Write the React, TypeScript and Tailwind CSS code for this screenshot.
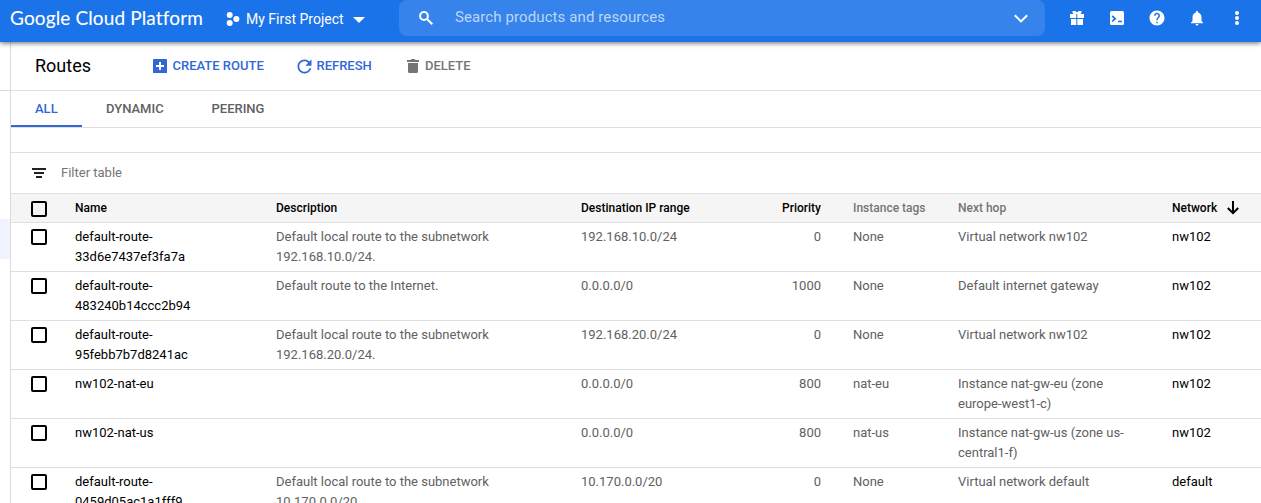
import React from "react";
import { MdHelp, MdNotifications, MdRefresh } from "react-icons/md";

type Route = {
  name: [string, string?];
  description: [string?, string?];
  range: string;
  priority: number;
  tags: string;
  hop: [string, string?];
  network: string;
};

const routes: Route[] = [
  { name: ["default-route-", "33d6e7437ef3fa7a"], description: ["Default local route to the subnetwork", "192.168.10.0/24."], range: "192.168.10.0/24", priority: 0, tags: "None", hop: ["Virtual network nw102"], network: "nw102" },
  { name: ["default-route-", "483240b14ccc2b94"], description: ["Default route to the Internet."], range: "0.0.0.0/0", priority: 1000, tags: "None", hop: ["Default internet gateway"], network: "nw102" },
  { name: ["default-route-", "95febb7b7d8241ac"], description: ["Default local route to the subnetwork", "192.168.20.0/24."], range: "192.168.20.0/24", priority: 0, tags: "None", hop: ["Virtual network nw102"], network: "nw102" },
  { name: ["nw102-nat-eu"], description: [], range: "0.0.0.0/0", priority: 800, tags: "nat-eu", hop: ["Instance nat-gw-eu (zone", "europe-west1-c)"], network: "nw102" },
  { name: ["nw102-nat-us"], description: [], range: "0.0.0.0/0", priority: 800, tags: "nat-us", hop: ["Instance nat-gw-us (zone us-", "central1-f)"], network: "nw102" },
  { name: ["default-route-", "0459d05ac1a1fff9"], description: ["Default local route to the subnetwork", "10.170.0.0/20."], range: "10.170.0.0/20", priority: 0, tags: "None", hop: ["Virtual network default"], network: "default" },
];

const columns =
  "grid grid-cols-[64px_201px_305px_200px_40px_32px_105px_214px_1fr]";

function Lines({ text }: { text: (string | undefined)[] }) {
  return (
    <div>
      {text.map((line, i) => (
        <div key={i}>{line}</div>
      ))}
    </div>
  );
}

function Checkbox() {
  return <span className="block size-4 rounded-[2px] border-2 border-black" />;
}

function TopBar() {
  return (
    <header className="relative z-10 flex h-[42px] shrink-0 bg-[#1a73e8] text-white shadow-[0_1px_5px_rgba(0,0,0,0.6)]">
      <div className="flex h-[37px] w-[399px] items-center pl-[10px]">
        <span className="w-[216px] whitespace-nowrap font-[Lato,sans-serif] text-[19px] tracking-[0.13px] [-webkit-text-stroke:0.1px_white]">
          Google Cloud Platform
        </span>
        <svg className="mt-[1px] h-[14px] w-[14px]" viewBox="0 0 14 14" fill="currentColor">
          <circle cx="3.7" cy="3" r="3" />
          <circle cx="10.4" cy="7" r="3" />
          <circle cx="3.7" cy="11" r="3" />
        </svg>
        <span className="ml-[6px] w-[107px] whitespace-nowrap pt-px text-[14px]">My First Project</span>
        <svg className="mt-[3px] h-[6px] w-[12px]" viewBox="0 0 12 6" fill="currentColor">
          <path d="M0 0h12L6 6z" />
        </svg>
      </div>
      <div className="flex h-9 w-[646px] items-center rounded-lg bg-[#3683eb] pl-[20px]">
        <svg className="h-[14px] w-[14px]" viewBox="0 0 14 14" fill="none" stroke="currentColor" strokeWidth="2">
          <circle cx="5" cy="5" r="3.900" />
          <path d="m8 8 5.300 5.300" />
        </svg>
        <span className="ml-[22px] flex-1 pb-[2px] text-[15px] tracking-[0.1px] text-[#bcd7f9]">
          Search products and resources
        </span>
        <svg className="mr-[17px] mt-[1px] h-[9px] w-[14px]" viewBox="0 0 14 9" fill="none" stroke="currentColor" strokeWidth="2">
          <path d="M.8 1.2 7 7.4l6.2-6.2" />
        </svg>
      </div>
      <div className="flex h-9 items-center gap-[22px] pl-[23px]">
        <svg className="size-[18px]" viewBox="0 0 18 18" fill="currentColor">
          <path d="M2 5h6.300v4H2zM9.300 5H16v4H9.300zM3 10h5.300v6H3zM9.300 10H15v6H9.300z" />
          <path d="M4.500 2h3L9 3.400 10.500 2h3v1.500L12.500 5h-7l-1-1.500z" />
        </svg>
        <svg className="size-[18px]" viewBox="0 0 18 18">
          <rect x="2" y="2" width="14" height="14" rx="1.500" fill="white" />
          <path d="M4.200 7 7.200 9.700l-3 2.700M10 12.500h4" fill="none" stroke="#1a73e8" strokeWidth="1.700" />
        </svg>
        <MdHelp className="size-[18px]" />
        <MdNotifications className="size-[18px]" />
        <svg className="size-[18px]" viewBox="0 0 18 18" fill="currentColor">
          <circle cx="9" cy="4" r="2" />
          <circle cx="9" cy="9" r="2" />
          <circle cx="9" cy="14" r="2" />
        </svg>
      </div>
    </header>
  );
}

export default function App() {
  return (
    <div className="flex h-[503px] w-[1261px] flex-col overflow-hidden bg-white font-[Roboto,sans-serif] text-[13px] text-black">
      <TopBar />
      <div className="flex min-h-0 flex-1">
        <aside className="flex w-[10px] shrink-0 flex-col">
          <div className="h-[49px] border-b border-[#dadada]" />
          <div className="mt-[128px] h-10 bg-[#f0f4fe]" />
        </aside>
        <main className="flex min-w-0 flex-1 flex-col border-l border-[#dadada]">
          <div className="flex h-[49px] shrink-0 items-center border-b border-[#e0e0e0] pl-6 font-medium text-[#3367d6]">
            <h1 className="w-[118px] pb-[2px] text-[18px] font-normal text-black">Routes</h1>
            <svg className="h-[14px] w-[14px]" viewBox="0 0 14 14">
              <rect width="14" height="14" rx="0.500" fill="currentColor" />
              <path d="M7 3v8M3 7h8" stroke="white" strokeWidth="2" />
            </svg>
            <span className="ml-[5.500px] w-[121px]">CREATE ROUTE</span>
            <MdRefresh className="size-[21px]" />
            <span className="ml-[2px] w-[90.500px]">REFRESH</span>
            <svg className="h-[14px] w-3 text-[#757575]" viewBox="0 0 12 14" fill="currentColor">
              <path d="M0 1h3.500l1-1h3l1 1H12v2H0zM1 4h10v8.500q0 1.500-1.500 1.500h-7Q1 14 1 12.500z" />
            </svg>
            <span className="ml-[6px] text-[#757575]">DELETE</span>
          </div>
          <nav className="flex h-[37px] shrink-0 border-b border-[#e0e0e0] font-medium leading-[36px] text-[#616161]">
            <span className="h-9 w-[71px] border-b-2 border-[#3367d6] pl-6 text-[#3367d6]">ALL</span>
            <span className="w-[105.500px] pl-6">DYNAMIC</span>
            <span className="pl-6">PEERING</span>
          </nav>
          <div className="h-[25px] shrink-0 border-b border-[#e0e0e0]" />
          <div className="flex h-[41px] shrink-0 items-center border-b border-[#e0e0e0] pl-[21px] text-[#757575]">
            <svg className="h-[10px] w-[14px] text-[#212121]" viewBox="0 0 14 10" fill="currentColor">
              <path d="M0 0h14v2H0zM2 4h10v2H2zM4 8h6v2H4z" />
            </svg>
            <span className="ml-[15px]">Filter table</span>
          </div>
          <div className={`${columns} h-[29px] shrink-0 border-b border-[#e0e0e0] bg-[#f5f5f5] text-[12px] font-medium leading-[28px]`}>
            <div className="pl-5 pt-[7px]"><Checkbox /></div>
            <div>Name</div>
            <div>Description</div>
            <div>Destination IP range</div>
            <div className="text-right">Priority</div>
            <div />
            <div className="text-[#757575]">Instance tags</div>
            <div className="text-[#757575]">Next hop</div>
            <div className="flex items-center gap-[10px]">
              Network
              <svg className="h-[14px] w-3" viewBox="0 0 12 14" fill="none" stroke="currentColor" strokeWidth="2">
                <path d="M6 0v12M.8 7 6 12.200 11.200 7" />
              </svg>
            </div>
          </div>
          {routes.map((route, i) => (
            <div key={i} className={`${columns} h-[49px] shrink-0 border-b border-[#e0e0e0] pt-1 leading-5 text-[#616161]`}>
              <div className="pl-5 pt-[2px] text-black"><Checkbox /></div>
              <div className="text-black"><Lines text={route.name} /></div>
              <Lines text={route.description} />
              <div>{route.range}</div>
              <div className="text-right">{route.priority}</div>
              <div />
              <div>{route.tags}</div>
              <Lines text={route.hop} />
              <div className="text-black">{route.network}</div>
            </div>
          ))}
        </main>
      </div>
    </div>
  );
}
